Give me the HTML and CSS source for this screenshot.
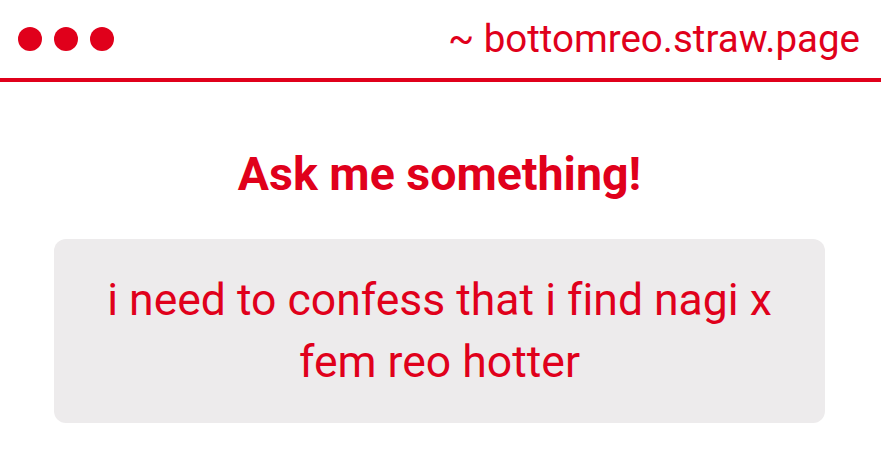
FILE: index.html
```html
<!DOCTYPE html>
<html>
<head>
<meta charset="utf-8">
<link rel="stylesheet" href="styles.css">
</head>
<body>
<header class="bar">
  <div class="dots"><span class="dot"></span><span class="dot"></span><span class="dot"></span></div>
  <div class="url">~ bottomreo.straw.page</div>
</header>
<main class="content">
  <h1 class="title">Ask me something!</h1>
  <div class="card">
    <p class="question">i need to confess that i find nagi x fem reo hotter</p>
  </div>
</main>
</body>
</html>
```
FILE: styles.css
```css
html, body {
  margin: 0;
  padding: 0;
  background: #ffffff;
  font-family: Roboto, "Liberation Sans", sans-serif;
  color: #e0001b;
  font-variant-ligatures: none;
}
.bar {
  display: flex;
  align-items: center;
  justify-content: space-between;
  height: 78px;
  padding: 0 21px 0 18px;
  border-bottom: 4px solid #e0001b;
}
.dots {
  display: flex;
  gap: 12px;
}
.dot {
  width: 24px;
  height: 24px;
  border-radius: 50%;
  background: #e0001b;
}
.url {
  font-size: 38.5px;
  line-height: 1;
}
.content {
  display: flex;
  flex-direction: column;
  align-items: center;
  padding: 0 56px 0 54px;
}
.title {
  margin: 64px 0 0;
  font-size: 46.5px;
  font-weight: 700;
  line-height: 56px;
}
.card {
  align-self: stretch;
  margin-top: 37px;
  background: #edebec;
  border-radius: 12px;
  padding: 30px 40px;
}
.question {
  margin: 0;
  text-align: center;
  font-size: 44.5px;
  line-height: 62px;
}
```
